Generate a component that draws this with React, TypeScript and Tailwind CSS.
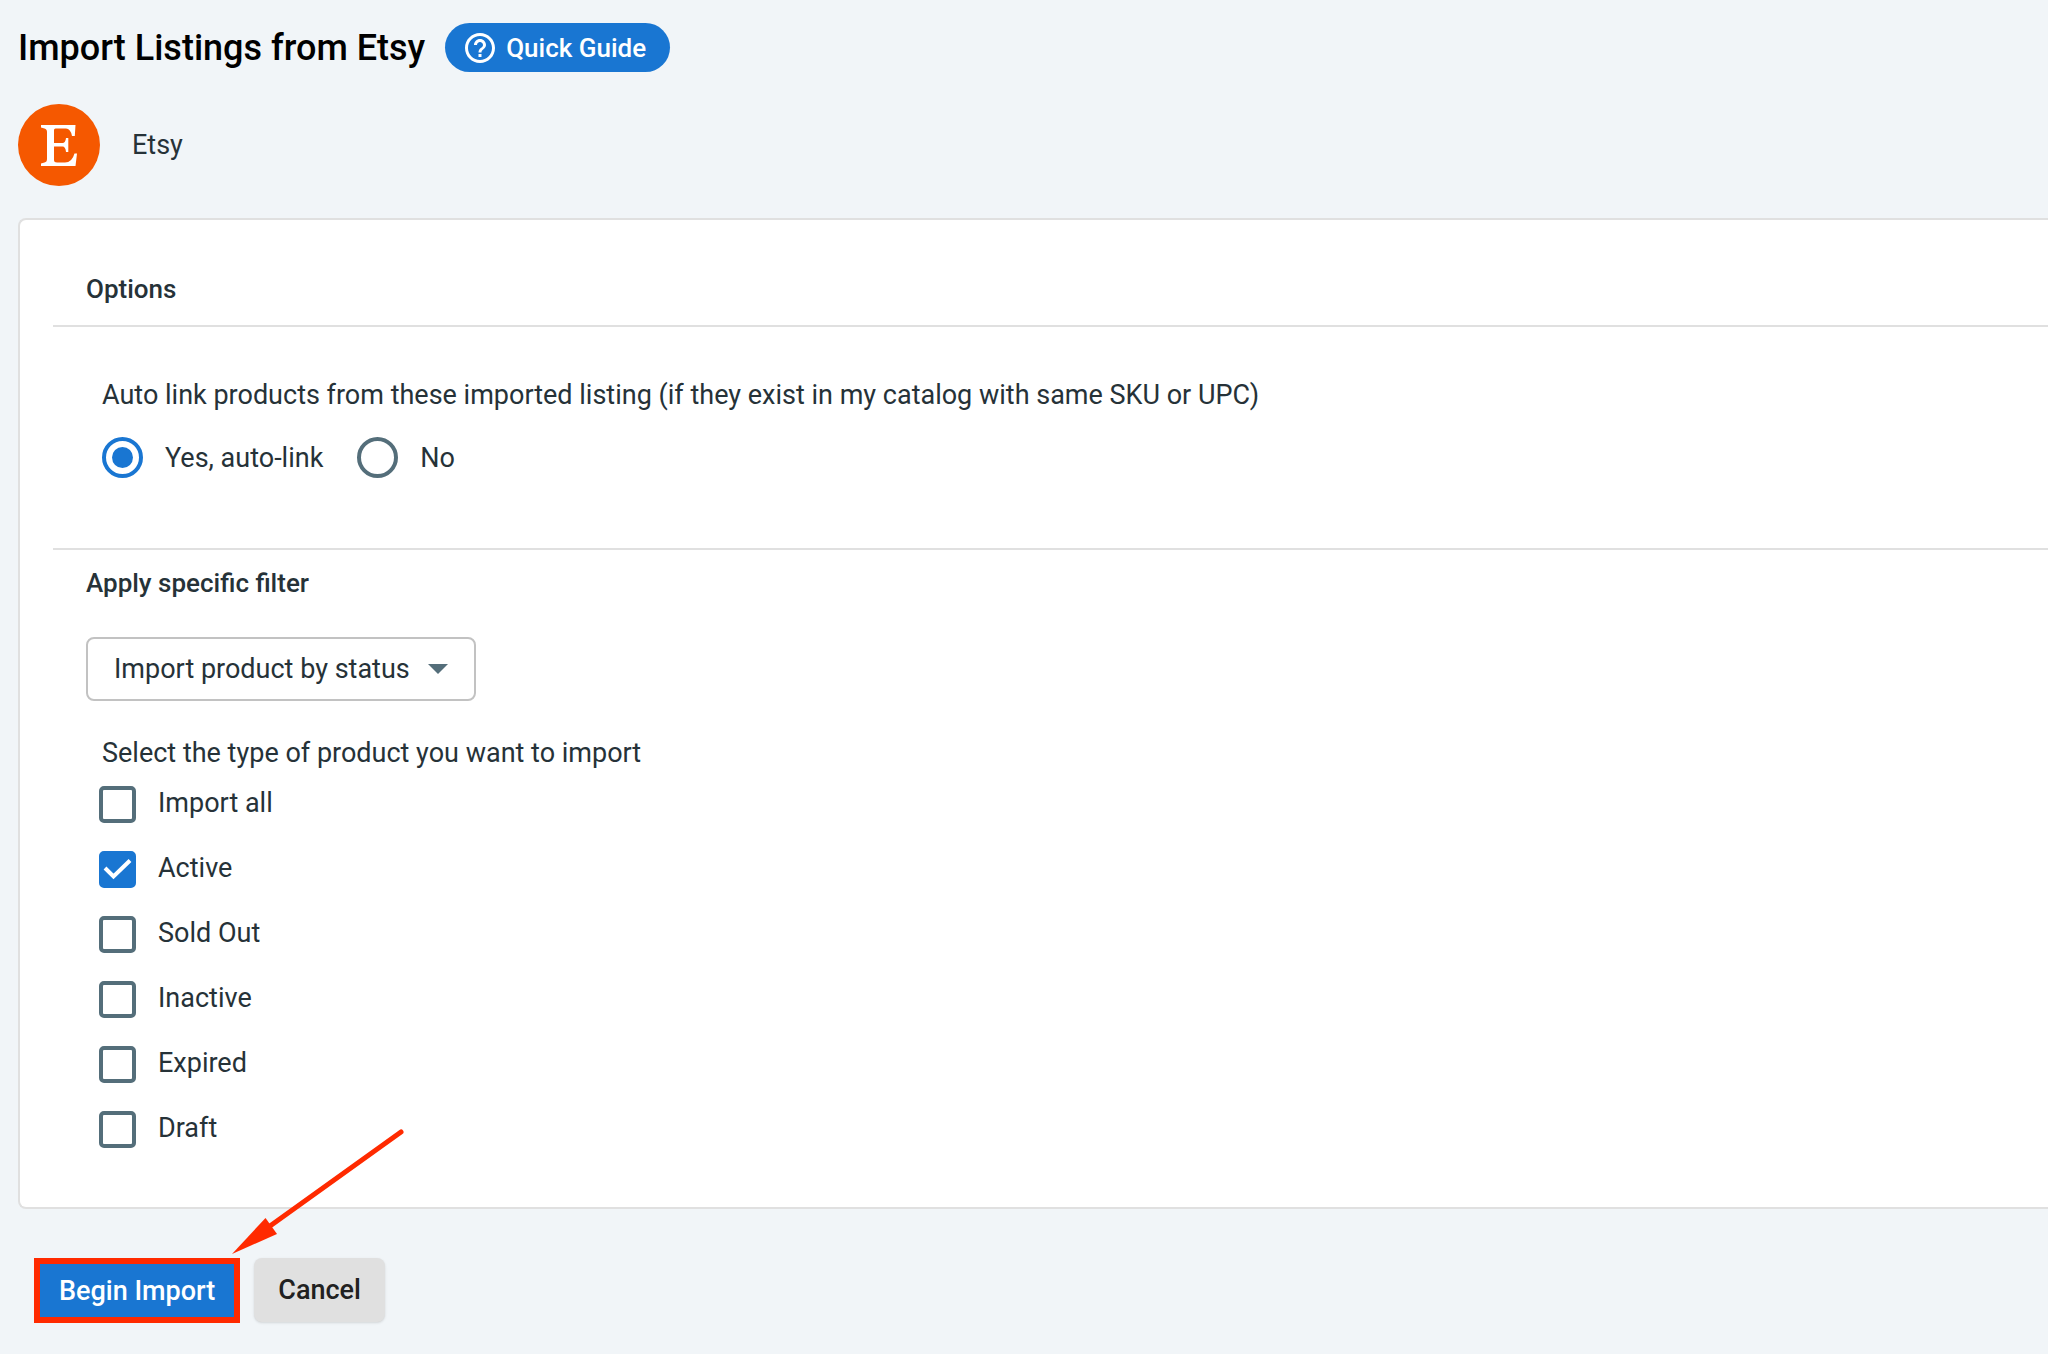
import { useState } from "react";

const STATUSES = ["Import all", "Active", "Sold Out", "Inactive", "Expired", "Draft"];

function EtsyLogo() {
  return (
    <svg viewBox="0 0 82 82" className="size-[82px] shrink-0" role="img" aria-label="Etsy logo">
      <circle cx="41" cy="41" r="41" fill="#f55800" />
      <path
        fill="#fff"
        d="M23 21H57.500L56.800 32H54Q52.500 24.500 48 24.500H37.500Q36 24.500 36 26V39H44.500Q47.500 39 48 34H50.300V48H48Q47.500 42.500 44.500 42.500H36V56Q36 58.500 39 58.500H47Q54 58.500 56.500 49.500H59L57.500 62H23V59.500L26.500 58.500Q29 58 29 55V28Q29 25 26.500 24.500L23 23.500Z"
      />
    </svg>
  );
}

function HelpIcon() {
  return (
    <svg viewBox="0 0 24 24" className="size-9 shrink-0" fill="#fff" aria-hidden="true">
      <path d="M11 18h2v-2h-2v2zm1-16C6.480 2 2 6.480 2 12s4.480 10 10 10 10-4.480 10-10S17.520 2 12 2zm0 18c-4.410 0-8-3.590-8-8s3.590-8 8-8 8 3.590 8 8-3.590 8-8 8zm0-14c-2.210 0-4 1.790-4 4h2c0-1.100.9-2 2-2s2 .9 2 2c0 2-3 1.750-3 5h2c0-2.250 3-2.500 3-5 0-2.210-1.790-4-4-4z" />
    </svg>
  );
}

function Radio({ label, checked, onChange }: { label: string; checked: boolean; onChange: () => void }) {
  return (
    <label className="flex items-center gap-[22px]">
      <span className="grid size-[41px] place-items-center">
        <input
          type="radio"
          name="auto-link"
          checked={checked}
          onChange={onChange}
          className="col-start-1 row-start-1 size-[41px] appearance-none rounded-full border-4 border-[#546e7a] checked:border-[#1976d2]"
        />
        {checked && <span className="pointer-events-none col-start-1 row-start-1 size-[21px] rounded-full bg-[#1976d2]" />}
      </span>
      {label}
    </label>
  );
}

function Checkbox({ label, checked, onChange }: { label: string; checked: boolean; onChange: () => void }) {
  return (
    <label className="flex items-center gap-[22px]">
      <span className="grid size-[37px] place-items-center">
        <input
          type="checkbox"
          checked={checked}
          onChange={onChange}
          className="col-start-1 row-start-1 size-[37px] appearance-none rounded-[5px] border-4 border-[#546e7a] checked:border-[#1976d2] checked:bg-[#1976d2]"
        />
        {checked && (
          <svg viewBox="0 0 37 37" className="pointer-events-none col-start-1 row-start-1 size-[37px]" fill="none" aria-hidden="true">
            <path d="M6 17L14.500 25.500L31 9.500" stroke="#fff" strokeWidth="4" />
          </svg>
        )}
      </span>
      <span className="pb-1">{label}</span>
    </label>
  );
}

export default function App() {
  const [autoLink, setAutoLink] = useState(true);
  const [selected, setSelected] = useState<string[]>(["Active"]);

  const toggle = (status: string) =>
    setSelected((s) => (s.includes(status) ? s.filter((x) => x !== status) : [...s, status]));

  return (
    <main className="min-h-screen bg-[#f1f5f8] pt-[23px] pb-8 pl-[18px] font-['Roboto',sans-serif] text-[27px] leading-8 text-[#263238]">
      <header className="flex items-center gap-5">
        <h1 className="text-[36px] leading-[48px] font-medium text-black">Import Listings from Etsy</h1>
        <a href="#guide" className="flex h-[49px] items-center gap-2 rounded-full bg-[#1976d2] pr-6 pl-[17px] text-[26px] font-medium text-white">
          <HelpIcon />
          Quick Guide
        </a>
      </header>

      <div className="mt-8 flex items-center gap-8">
        <EtsyLogo />
        <span>Etsy</span>
      </div>

      <section className="mt-8 rounded-l-lg border-2 border-r-0 border-[#e0e0e0] bg-white pt-[53px] pb-[59px] pl-[33px]">
        <h2 className="border-b-2 border-[#e0e0e0] pb-5 pl-[33px] text-[26px] font-medium">Options</h2>

        <fieldset className="border-b-2 border-[#e0e0e0] pt-[52px] pb-[70px] pl-[49px]">
          <legend className="contents">Auto link products from these imported listing (if they exist in my catalog with same SKU or UPC)</legend>
          <div className="mt-[26px] flex gap-[34px]">
            <Radio label="Yes, auto-link" checked={autoLink} onChange={() => setAutoLink(true)} />
            <Radio label="No" checked={!autoLink} onChange={() => setAutoLink(false)} />
          </div>
        </fieldset>

        <div className="pl-[33px]">
          <h2 className="mt-[17px] text-[26px] font-medium">Apply specific filter</h2>
          <div className="mt-[38px] inline-grid items-center">
            <select
              aria-label="Filter"
              className="col-start-1 row-start-1 h-16 appearance-none rounded-lg border-2 border-[#c2c2c2] bg-white pr-16 pl-[26px]"
            >
              <option>Import product by status</option>
            </select>
            <svg viewBox="0 0 20 10" className="pointer-events-none col-start-1 row-start-1 mr-7 h-[10px] w-5 justify-self-end" aria-hidden="true">
              <path d="M0 0H20L10 10Z" fill="#546e7a" />
            </svg>
          </div>

          <div className="mt-9 pl-4" role="group" aria-labelledby="status-label">
            <p id="status-label">Select the type of product you want to import</p>
            <div className="mt-[17px] -ml-[3px] flex flex-col items-start gap-7">
              {STATUSES.map((status) => (
                <Checkbox key={status} label={status} checked={selected.includes(status)} onChange={() => toggle(status)} />
              ))}
            </div>
          </div>
        </div>
      </section>

      <div className="mt-[49px] flex items-start gap-[14px] pl-4">
        <div className="relative">
          <button type="button" className="h-[65px] border-[6px] border-[#ff2a00] bg-[#1976d2] px-[19px] font-medium text-white">
            Begin Import
          </button>
          <svg viewBox="0 0 172 126" className="pointer-events-none absolute bottom-full left-full mb-1 -ml-2 h-[126px] w-[172px]" aria-hidden="true">
            <path d="M38 98L169 4" stroke="#ff2a00" strokeWidth="5" strokeLinecap="round" />
            <path d="M0 126L33.500 90L45 106Z" fill="#ff2a00" />
          </svg>
        </div>
        <button type="button" className="h-16 rounded-lg bg-[#e0e0e0] px-6 font-medium text-[#212121] shadow-sm">
          Cancel
        </button>
      </div>
    </main>
  );
}
